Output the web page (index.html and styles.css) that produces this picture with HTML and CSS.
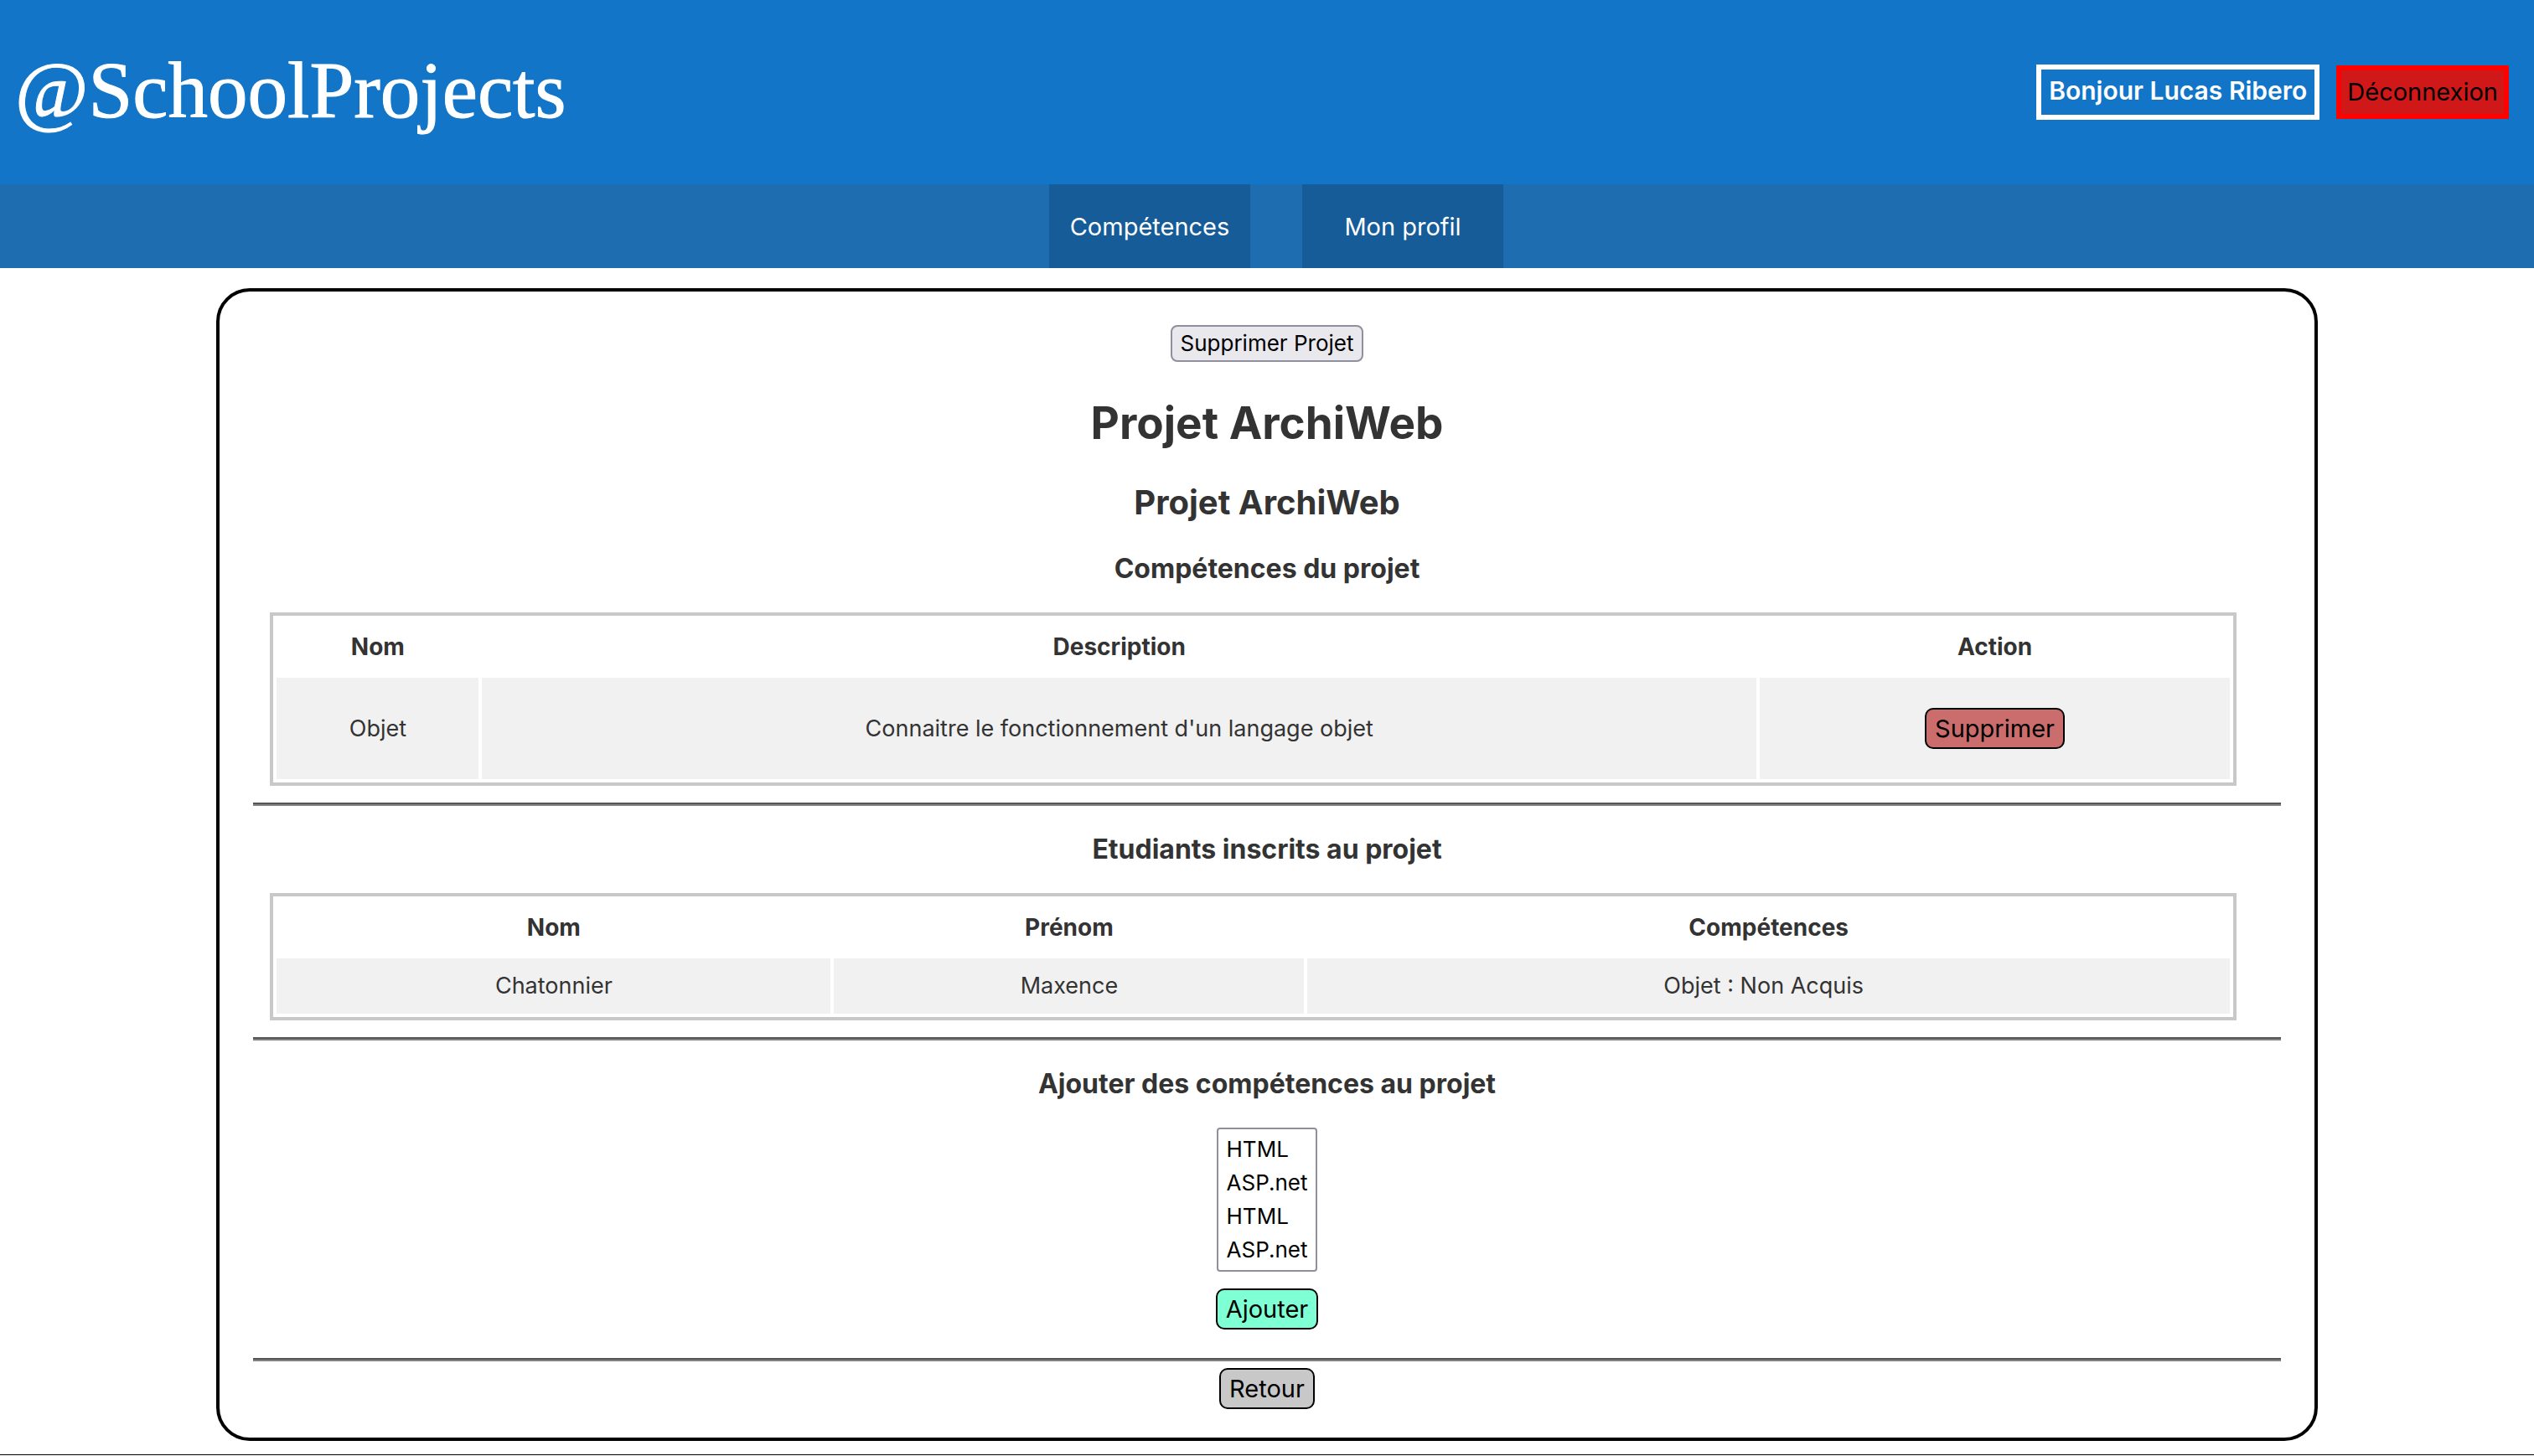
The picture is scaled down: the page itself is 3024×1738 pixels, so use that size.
FILE: index.html
```html
<!DOCTYPE html>
<html lang="fr">
<head>
<meta charset="utf-8">
<title>@SchoolProjects</title>
<link rel="stylesheet" href="styles.css">
</head>
<body>
<header class="header">
  <a class="logo" href="#">@SchoolProjects</a>
  <div class="session">
    <a class="user" href="#">Bonjour Lucas Ribero</a>
    <button class="logout" type="button">Déconnexion</button>
  </div>
</header>
<nav class="menu">
  <a class="menu-item" href="#">Compétences</a>
  <a class="menu-item" href="#">Mon profil</a>
</nav>
<main class="card">
  <button class="delete-project" type="button">Supprimer Projet</button>
  <h1 class="title">Projet ArchiWeb</h1>
  <h2 class="subtitle">Projet ArchiWeb</h2>

  <h3 class="section-title">Compétences du projet</h3>
  <table class="grid">
    <colgroup><col class="skill-name"><col><col class="skill-action"></colgroup>
    <thead>
      <tr><th>Nom</th><th>Description</th><th>Action</th></tr>
    </thead>
    <tbody>
      <tr>
        <td>Objet</td>
        <td>Connaitre le fonctionnement d'un langage objet</td>
        <td class="action"><button class="btn btn-delete" type="button">Supprimer</button></td>
      </tr>
    </tbody>
  </table>
  <hr class="rule">

  <h3 class="section-title">Etudiants inscrits au projet</h3>
  <table class="grid">
    <colgroup><col class="student-name"><col class="student-first"><col></colgroup>
    <thead>
      <tr><th>Nom</th><th>Prénom</th><th>Compétences</th></tr>
    </thead>
    <tbody>
      <tr><td>Chatonnier</td><td>Maxence</td><td class="levels">Objet : Non Acquis</td></tr>
    </tbody>
  </table>
  <hr class="rule">

  <h3 class="section-title"><label for="skills">Ajouter des compétences au projet</label></h3>
  <form class="add-form">
    <select class="skills" id="skills" multiple size="4">
      <option>HTML</option>
      <option>ASP.net</option>
      <option>HTML</option>
      <option>ASP.net</option>
    </select>
    <button class="btn btn-add" type="button">Ajouter</button>
  </form>
  <hr class="rule">
  <button class="btn btn-back" type="button">Retour</button>
</main>
<footer class="footer"></footer>
</body>
</html>
```
FILE: styles.css
```css
body {
  margin: 0;
  background: #fff;
  color: #333;
  font-family: Inter, "Liberation Sans", sans-serif;
  font-size: 28px;
  line-height: 34px;
}

button,
select {
  font-family: inherit;
  color: #000;
}

a {
  text-decoration: none;
}

.header {
  display: flex;
  align-items: center;
  justify-content: space-between;
  height: 220px;
  padding: 0 30px 0 18px;
  background: #1275c7;
}

.logo {
  padding-bottom: 4px;
  color: #fff;
  font-family: "Liberation Serif", serif;
  font-size: 95px;
  line-height: 110px;
  -webkit-text-stroke: 1px #fff;
}

.session {
  display: flex;
  align-items: center;
  gap: 20px;
}

.user {
  padding: 7px 9px 11px;
  border: 6px solid #fff;
  color: #fff;
  font-size: 30px;
  line-height: 36px;
  font-weight: 600;
}

.logout {
  padding: 8px 7px;
  border: 6px solid #f00;
  background: #d01818;
  font-size: 29px;
  line-height: 36px;
}

.menu {
  display: flex;
  justify-content: center;
  gap: 62px;
  padding-left: 22px;
  background: #1d6db0;
}

.menu-item {
  box-sizing: border-box;
  width: 240px;
  padding: 33px 0 31px;
  background: #155c98;
  color: #fff;
  font-size: 29px;
  line-height: 36px;
  text-align: center;
}

.card {
  display: flex;
  flex-direction: column;
  align-items: center;
  width: 80%;
  margin: 24px auto 16px;
  padding: 40px 40px 34px;
  border: 4px solid #000;
  border-radius: 40px;
}

.delete-project {
  padding: 3px 10px;
  border: 2px solid #8f8f9d;
  border-radius: 8px;
  background: #e9e9ed;
  font-size: 26px;
  line-height: 34px;
}

.title {
  margin: 39px 0 0;
  font-size: 53px;
  line-height: 68px;
}

.subtitle {
  margin: 36px 0 2px;
  font-size: 40px;
  line-height: 50px;
}

.section-title {
  margin: 32px 0;
  font-size: 32px;
  line-height: 40px;
}

.grid {
  align-self: flex-start;
  width: 97%;
  margin: 0 20px 20px;
  border: 4px solid #c8c8c8;
  border-spacing: 4px;
  table-layout: fixed;
  text-align: center;
}

.grid th,
.grid td {
  padding: 16px;
}

.grid td {
  background: #f1f1f1;
  font-size: 27px;
}

.grid .action {
  padding: 36px 16px;
}

.grid .levels {
  padding-right: 28px;
}

.skill-name {
  width: 241px;
}

.skill-action {
  width: 561px;
}

.student-name {
  width: 661px;
}

.student-first {
  width: 561px;
}

.rule {
  box-sizing: border-box;
  width: 100%;
  height: 4px;
  margin: 0;
  border: 0;
  border-top: 2px solid #555;
  border-bottom: 2px solid #808080;
}

.btn {
  display: block;
  padding: 4px 10px;
  border: 2px solid #000;
  border-radius: 10px;
  font-size: 29px;
  line-height: 37px;
}

.btn-delete {
  margin: 0 auto;
  background: #cc6d6d;
}

.btn-add {
  background: #7fffd4;
}

.btn-back {
  margin-top: 8px;
  background: #c8c8c8;
}

.add-form {
  display: flex;
  flex-direction: column;
  align-items: center;
  gap: 20px;
  margin-bottom: 34px;
}

.skills {
  box-sizing: border-box;
  height: 172px;
  padding: 5px 8px 3px;
  border: 2px solid #8f8f9d;
  border-radius: 4px;
  background: #fff;
  font-size: 26px;
  overflow: hidden;
  scrollbar-width: none;
}

.skills option {
  padding: 3px 2px;
  line-height: 34px;
  min-height: 34px;
}

.footer {
  border-top: 1px solid #000;
}
```
